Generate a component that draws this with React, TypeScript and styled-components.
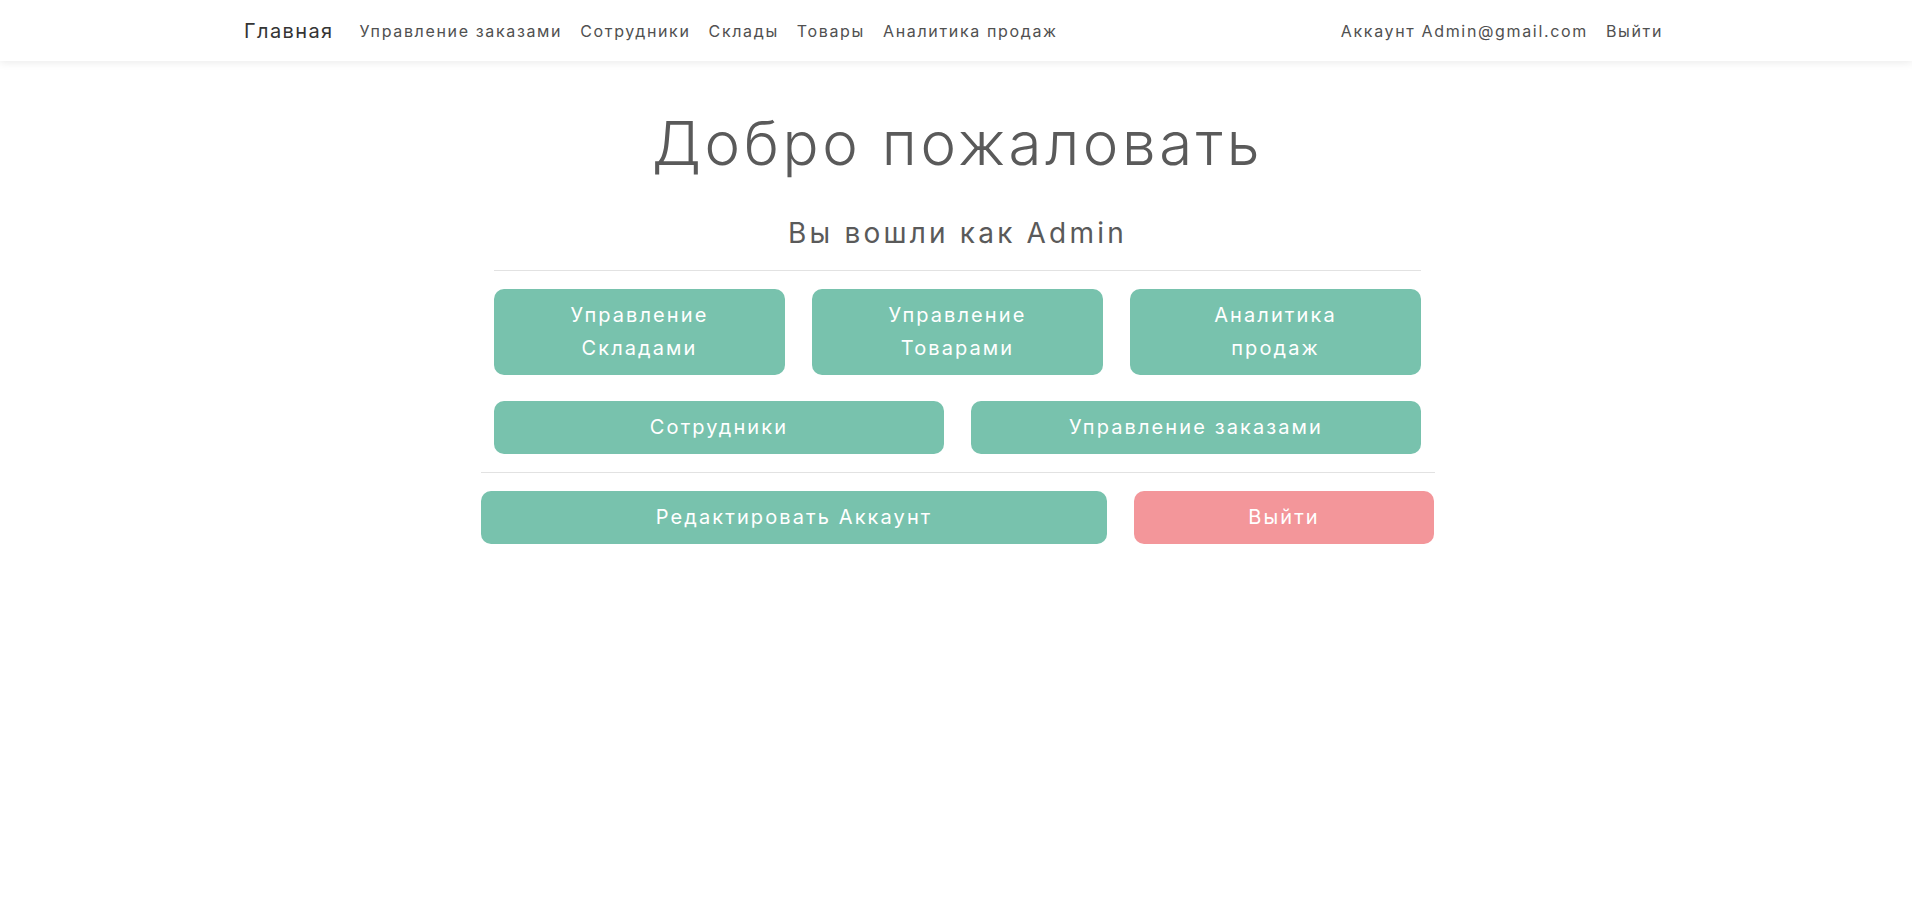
import React from "react";
import styled, { createGlobalStyle } from "styled-components";

const GlobalStyle = createGlobalStyle`
  * { box-sizing: border-box; }
  html, body { margin: 0; padding: 0; background: #ffffff; }
  body {
    font-family: Inter, "Noto Sans", "DejaVu Sans", sans-serif;
    color: #5a5a5a;
  }
`;

const Navbar = styled.nav`
  height: 61px;
  background: #ffffff;
  box-shadow: 0 2px 8px rgba(0, 0, 0, 0.08);
  display: flex;
  justify-content: center;
`;

const NavInner = styled.div`
  width: 1440px;
  padding: 0 4px 0 8px;
  display: flex;
  align-items: center;
`;

const Brand = styled.a`
  font-size: 20px;
  color: #343434;
  letter-spacing: 1.4px;
  margin-right: 17px;
  text-decoration: none;
`;

const NavList = styled.div<{ $end?: boolean }>`
  display: flex;
  align-items: center;
  margin-left: ${(p) => (p.$end ? "auto" : "0")};
`;

const NavLink = styled.a`
  font-size: 16px;
  color: #505050;
  letter-spacing: 1.65px;
  padding: 8px 9px;
  text-decoration: none;
`;

const Main = styled.main`
  display: flex;
  flex-direction: column;
  align-items: center;
  padding-top: 46px;
  padding-left: 3px;
`;

const Title = styled.h1`
  margin: 0;
  font-size: 60px;
  line-height: 72px;
  font-weight: 300;
  color: #5a5a5a;
  letter-spacing: 3.6px;
`;

const Subtitle = styled.h3`
  margin: 37px 0 0;
  font-size: 28px;
  line-height: 34px;
  font-weight: 400;
  color: #5a5a5a;
  letter-spacing: 3.2px;
`;

const Divider = styled.hr<{ $width: number; $top: number }>`
  width: ${(p) => p.$width}px;
  margin: ${(p) => p.$top}px 0 0;
  border: 0;
  border-top: 1px solid #e2e2e2;
`;

const Grid = styled.div<{ $cols: string; $width: number; $top: number }>`
  width: ${(p) => p.$width}px;
  margin-top: ${(p) => p.$top}px;
  display: grid;
  grid-template-columns: ${(p) => p.$cols};
  column-gap: 27px;
`;

const Button = styled.button<{ $danger?: boolean }>`
  border: 0;
  border-radius: 10px;
  background: ${(p) => (p.$danger ? "#f3969a" : "#78c2ad")};
  color: #ffffff;
  font-family: inherit;
  font-size: 20px;
  line-height: 33px;
  letter-spacing: 2.1px;
  padding: 10px 16px;
  cursor: pointer;
  display: flex;
  flex-direction: column;
  align-items: center;
  justify-content: center;
`;

const Line = styled.span`
  display: block;
`;

const topButtons = [
  ["Управление", "Складами"],
  ["Управление", "Товарами"],
  ["Аналитика", "продаж"],
];

export default function App() {
  return (
    <>
      <GlobalStyle />
      <Navbar>
        <NavInner>
          <Brand href="#">Главная</Brand>
          <NavList>
            <NavLink href="#">Управление заказами</NavLink>
            <NavLink href="#">Сотрудники</NavLink>
            <NavLink href="#">Склады</NavLink>
            <NavLink href="#">Товары</NavLink>
            <NavLink href="#">Аналитика продаж</NavLink>
          </NavList>
          <NavList $end>
            <NavLink href="#">Аккаунт Admin@gmail.com</NavLink>
            <NavLink href="#">Выйти</NavLink>
          </NavList>
        </NavInner>
      </Navbar>
      <Main>
        <Title>Добро пожаловать</Title>
        <Subtitle>Вы вошли как Admin</Subtitle>
        <Divider $width={927} $top={20} />
        <Grid $cols="1fr 1fr 1fr" $width={927} $top={18}>
          {topButtons.map((lines) => (
            <Button key={lines.join(" ")}>
              {lines.map((l) => (
                <Line key={l}>{l}</Line>
              ))}
            </Button>
          ))}
        </Grid>
        <Grid $cols="1fr 1fr" $width={927} $top={26}>
          <Button>Сотрудники</Button>
          <Button>Управление заказами</Button>
        </Grid>
        <Divider $width={954} $top={18} />
        <Grid $cols="626px 300px" $width={953} $top={18}>
          <Button>Редактировать Аккаунт</Button>
          <Button $danger>Выйти</Button>
        </Grid>
      </Main>
    </>
  );
}
